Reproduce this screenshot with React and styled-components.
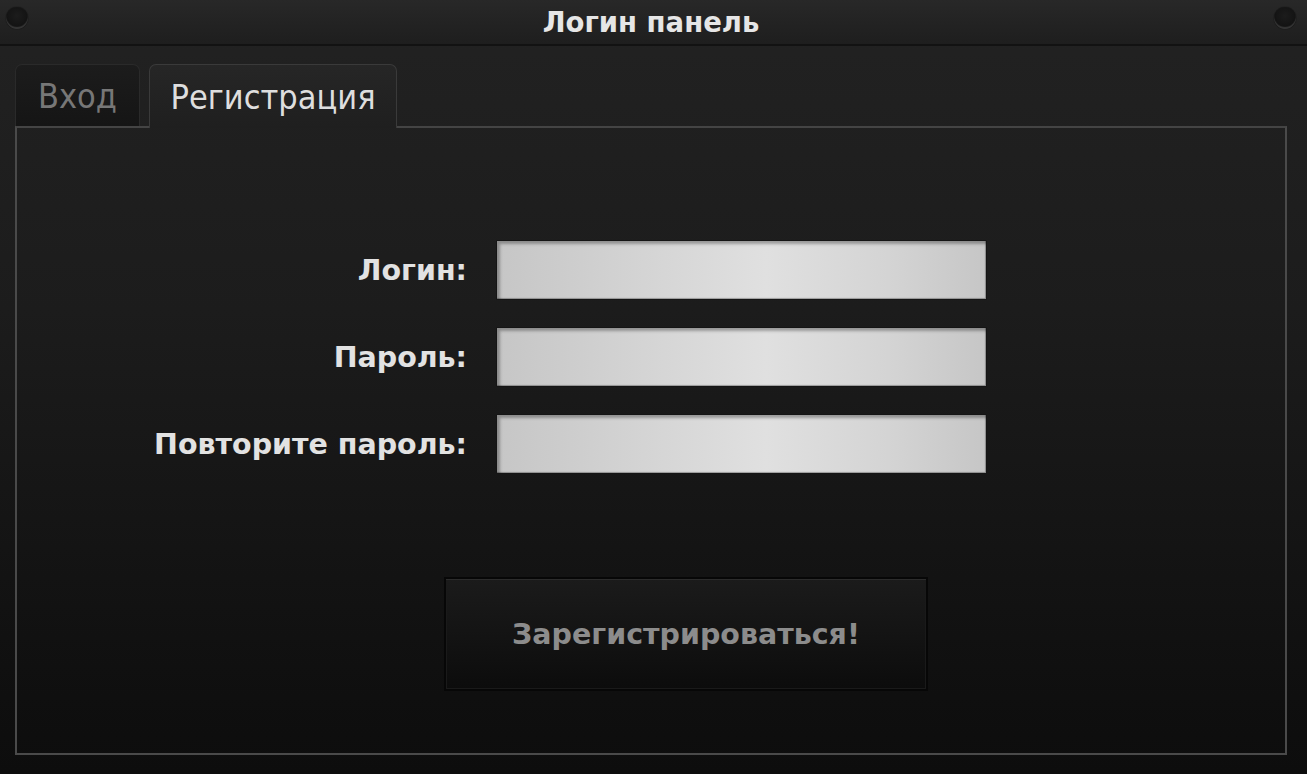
import React from "react";
import styled, { createGlobalStyle } from "styled-components";

const Global = createGlobalStyle`
  html, body { margin: 0; padding: 0; background: #0e0e0e; }
  * { box-sizing: border-box; }
`;

const Window = styled.div`
  width: 1307px;
  height: 774px;
  display: flex;
  flex-direction: column;
  background: linear-gradient(to bottom, #222222 0%, #1c1c1c 40%, #0f0f0f 90%, #0d0d0d 100%);
  font-family: "DejaVu Sans", "Noto Sans", sans-serif;
  overflow: hidden;
`;

const TitleBar = styled.div`
  height: 46px;
  flex: none;
  display: grid;
  grid-template-columns: 1fr auto 1fr;
  align-items: center;
  padding: 0 11px 0 6px;
  background: linear-gradient(to bottom, #282828, #1e1e1e);
  border-bottom: 2px solid #121212;
`;

const Title = styled.div`
  color: #e6e6e6;
  font-weight: bold;
  font-size: 27.5px;
`;

const Knob = styled.div`
  width: 22px;
  height: 22px;
  border-radius: 50%;
  justify-self: ${(p) => (p.$right ? "end" : "start")};
  align-self: start;
  margin-top: 7px;
  background: radial-gradient(circle at 50% 40%, #1c1c1c 0%, #121212 70%);
  box-shadow: inset 0 -2px 1px rgba(120, 120, 120, 0.35), 0 0 1px #000;
`;

const Body = styled.div`
  flex: 1;
  display: flex;
  flex-direction: column;
  padding: 16px 20px 19px 15px;
`;

const Tabs = styled.div`
  display: flex;
  align-items: flex-end;
  gap: 9px;
  height: 64px;
`;

const Tab = styled.div`
  height: ${(p) => (p.$active ? "64px" : "62px")};
  padding: 0 ${(p) => (p.$active ? "20.5px" : "22px")};
  display: flex;
  align-items: center;
  font-size: 34px;
  font-stretch: condensed;
  color: ${(p) => (p.$active ? "#dedede" : "#777777")};
  border-radius: 7px 7px 0 0;
  border: 1px solid ${(p) => (p.$active ? "#3a3a3a" : "#2a2a2a")};
  border-bottom: none;
  background: ${(p) =>
    p.$active
      ? "linear-gradient(to bottom, #262626, #1f1f1f)"
      : "linear-gradient(to bottom, #1c1c1c, #151515)"};
  margin-bottom: ${(p) => (p.$active ? "-2px" : "0")};
  position: relative;
  z-index: ${(p) => (p.$active ? 1 : 0)};
`;

const Panel = styled.div`
  flex: 1;
  border: 2px solid #4a4a4a;
  border-top-color: #444;
  display: flex;
  flex-direction: column;
  padding-top: 112px;
`;

const Form = styled.div`
  display: grid;
  grid-template-columns: 450px 491px;
  column-gap: 29px;
  row-gap: 27px;
  align-items: center;
`;

const Label = styled.label`
  text-align: right;
  color: #e2e2e2;
  font-weight: bold;
  font-size: 28.5px;
`;

const Input = styled.input`
  height: 60px;
  border: 1px solid #151515;
  border-radius: 1px;
  background: linear-gradient(to right, #c6c6c6 0%, #d4d4d4 30%, #e0e0e0 55%, #d4d4d4 80%, #c6c6c6 100%);
  box-shadow: inset 3px 3px 3px rgba(0, 0, 0, 0.3), inset -1px -1px 1px rgba(0, 0, 0, 0.3);
  outline: none;
  font-size: 22px;
  padding: 0 10px;
`;

const Button = styled.button`
  margin: 103px 0 0 427px;
  width: 484px;
  height: 114px;
  border: 2px solid #070707;
  background: linear-gradient(to bottom, #1b1b1b, #0c0c0c);
  box-shadow: inset 0 1px 0 #2c2c2c, inset 0 0 0 1px #1a1a1a;
  color: #8c8c8c;
  font-family: "DejaVu Sans", "Noto Sans", sans-serif;
  font-weight: bold;
  font-size: 28.5px;
  cursor: pointer;
`;

export default function App() {
  return (
    <>
      <Global />
      <Window>
        <TitleBar>
          <Knob />
          <Title>Логин панель</Title>
          <Knob $right />
        </TitleBar>
        <Body>
          <Tabs>
            <Tab>Вход</Tab>
            <Tab $active>Регистрация</Tab>
          </Tabs>
          <Panel>
            <Form>
              <Label>Логин:</Label>
              <Input type="text" />
              <Label>Пароль:</Label>
              <Input type="password" />
              <Label>Повторите пароль:</Label>
              <Input type="password" />
            </Form>
            <Button>Зарегистрироваться!</Button>
          </Panel>
        </Body>
      </Window>
    </>
  );
}
